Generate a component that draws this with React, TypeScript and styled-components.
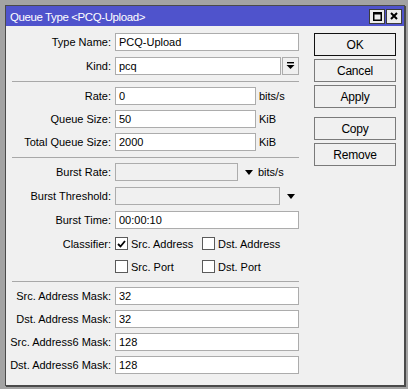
import React from "react";
import styled, { createGlobalStyle } from "styled-components";

const Global = createGlobalStyle`
  html, body {
    margin: 0;
    padding: 0;
    background: #a3a3a3;
  }
  body {
    font-family: "Liberation Sans", Arial, sans-serif;
    font-size: 11px;
    color: #000;
  }
`;

const Screen = styled.div`
  width: 408px;
  height: 389px;
  padding: 5px 0 0 5px;
  box-sizing: border-box;
`;

const Window = styled.div`
  width: 400px;
  height: 381px;
  border: 1px solid #4a4a4a;
  box-shadow: 1px 1px 0 #4a4a4a;
  background: #f0f0f0;
  box-sizing: border-box;
  display: flex;
  flex-direction: column;
`;

const TitleBar = styled.div`
  height: 20px;
  background: #4f53cc;
  display: flex;
  align-items: center;
  padding: 0 2px 0 4px;
`;

const Title = styled.span`
  flex: 1;
  color: #fff;
  font-size: 11.5px;
  letter-spacing: -0.4px;
  padding-top: 1px;
`;

const TitleButton = styled.div`
  width: 14px;
  height: 13px;
  margin-left: 1px;
  background: #ececec;
  border: 1px solid #3c3c3c;
  display: flex;
  align-items: center;
  justify-content: center;
`;

const Body = styled.div`
  flex: 1;
  display: flex;
  padding: 7px 7px 0 0;
`;

const Form = styled.div`
  width: 293px;
  display: flex;
  flex-direction: column;
`;

const Section = styled.div<{ $gap: number; $line?: boolean }>`
  display: flex;
  flex-direction: column;
  gap: ${(p) => p.$gap}px;
  padding-bottom: 6px;
  ${(p) =>
    p.$line &&
    `border-top: 1px solid #a8a8a8; margin-left: 6px; padding-top: 5px;`}
  & > * {
    ${(p) => p.$line && `margin-left: -6px;`}
  }
`;

const Row = styled.div<{ $h?: number }>`
  display: flex;
  align-items: center;
  height: ${(p) => p.$h ?? 18}px;
`;

const Label = styled.div`
  width: 109px;
  padding-right: 4px;
  box-sizing: border-box;
  text-align: right;
  white-space: nowrap;
`;

const Input = styled.div<{ $w: number; $disabled?: boolean }>`
  width: ${(p) => p.$w}px;
  height: 18px;
  box-sizing: border-box;
  border: 1px solid #acacac;
  background: ${(p) => (p.$disabled ? "#f0f0f0" : "#fff")};
  padding: 0 3px;
  line-height: 16px;
  white-space: nowrap;
`;

const Unit = styled.span<{ $ml?: number }>`
  margin-left: ${(p) => p.$ml ?? 3}px;
`;

const DropButton = styled.div`
  width: 17px;
  height: 18px;
  margin-left: 1px;
  box-sizing: border-box;
  border: 1px solid #acacac;
  background: #f0f0f0;
  display: flex;
  align-items: center;
  justify-content: center;
`;

const Arrow = styled.span<{ $ml: number }>`
  display: inline-block;
  margin-left: ${(p) => p.$ml}px;
  width: 0;
  height: 0;
  border-left: 4px solid transparent;
  border-right: 4px solid transparent;
  border-top: 5px solid #000;
`;

const Check = styled.label<{ $w: number }>`
  width: ${(p) => p.$w}px;
  display: flex;
  align-items: center;
  white-space: nowrap;
`;

const Box = styled.span`
  width: 13px;
  height: 13px;
  box-sizing: border-box;
  border: 1px solid #5a5a5a;
  background: #fff;
  margin-right: 3px;
  display: flex;
  align-items: center;
  justify-content: center;
`;

const Buttons = styled.div`
  margin-left: 15px;
  display: flex;
  flex-direction: column;
  gap: 3px;
`;

const Button = styled.div<{ $primary?: boolean; $spaced?: boolean }>`
  width: 82px;
  height: 23px;
  box-sizing: border-box;
  border: 1px solid ${(p) => (p.$primary ? "#111" : "#7a7a7a")};
  ${(p) => p.$primary && "box-shadow: inset 0 0 0 1px #f0f0f0;"}
  background: #f0f0f0;
  display: flex;
  align-items: center;
  justify-content: center;
  font-size: 12px;
  letter-spacing: -0.2px;
  margin-top: ${(p) => (p.$spaced ? 6 : 0)}px;
`;

const CheckMark = () => (
  <svg width="9" height="8" viewBox="0 0 9 8">
    <path d="M1 4 L3.5 6.5 L8 1" stroke="#000" strokeWidth="1.8" fill="none" />
  </svg>
);

const DropIcon = () => (
  <svg width="9" height="8" viewBox="0 0 9 8">
    <rect x="1" y="0" width="7" height="1.4" fill="#000" />
    <path d="M0.5 3 H8.5 L4.5 7 Z" fill="#000" />
  </svg>
);

const Field = ({ label, value, w = 184, unit }: { label: string; value: string; w?: number; unit?: string }) => (
  <Row>
    <Label>{label}</Label>
    <Input $w={w}>{value}</Input>
    {unit && <Unit>{unit}</Unit>}
  </Row>
);

export default function App() {
  return (
    <Screen>
      <Global />
      <Window>
        <TitleBar>
          <Title>Queue Type &lt;PCQ-Upload&gt;</Title>
          <TitleButton>
            <svg width="9" height="9" viewBox="0 0 9 9">
              <rect x="0.75" y="0.75" width="7.5" height="7.5" fill="none" stroke="#000" strokeWidth="1.5" />
              <rect x="0" y="0" width="9" height="2.5" fill="#000" />
            </svg>
          </TitleButton>
          <TitleButton>
            <svg width="8" height="8" viewBox="0 0 8 8">
              <path d="M1 1 L7 7 M7 1 L1 7" stroke="#000" strokeWidth="2" />
            </svg>
          </TitleButton>
        </TitleBar>
        <Body>
          <Form>
            <Section $gap={6}>
              <Field label="Type Name:" value="PCQ-Upload" />
              <Row>
                <Label>Kind:</Label>
                <Input $w={166}>pcq</Input>
                <DropButton>
                  <DropIcon />
                </DropButton>
              </Row>
            </Section>
            <Section $gap={5} $line>
              <Field label="Rate:" value="0" w={141} unit="bits/s" />
              <Field label="Queue Size:" value="50" w={141} unit="KiB" />
              <Field label="Total Queue Size:" value="2000" w={141} unit="KiB" />
            </Section>
            <Section $gap={6} $line>
              <Row>
                <Label>Burst Rate:</Label>
                <Input $w={123} $disabled />
                <Arrow $ml={7} />
                <Unit $ml={5}>bits/s</Unit>
              </Row>
              <Row>
                <Label>Burst Threshold:</Label>
                <Input $w={165} $disabled />
                <Arrow $ml={7} />
              </Row>
              <Field label="Burst Time:" value="00:00:10" />
              <Row $h={17}>
                <Label>Classifier:</Label>
                <Check $w={87}>
                  <Box>
                    <CheckMark />
                  </Box>
                  Src. Address
                </Check>
                <Check $w={90}>
                  <Box />
                  Dst. Address
                </Check>
              </Row>
              <Row $h={17}>
                <Label />
                <Check $w={87}>
                  <Box />
                  Src. Port
                </Check>
                <Check $w={90}>
                  <Box />
                  Dst. Port
                </Check>
              </Row>
            </Section>
            <Section $gap={5} $line>
              <Field label="Src. Address Mask:" value="32" />
              <Field label="Dst. Address Mask:" value="32" />
              <Field label="Src. Address6 Mask:" value="128" />
              <Field label="Dst. Address6 Mask:" value="128" />
            </Section>
          </Form>
          <Buttons>
            <Button $primary>OK</Button>
            <Button>Cancel</Button>
            <Button>Apply</Button>
            <Button $spaced>Copy</Button>
            <Button>Remove</Button>
          </Buttons>
        </Body>
      </Window>
    </Screen>
  );
}
